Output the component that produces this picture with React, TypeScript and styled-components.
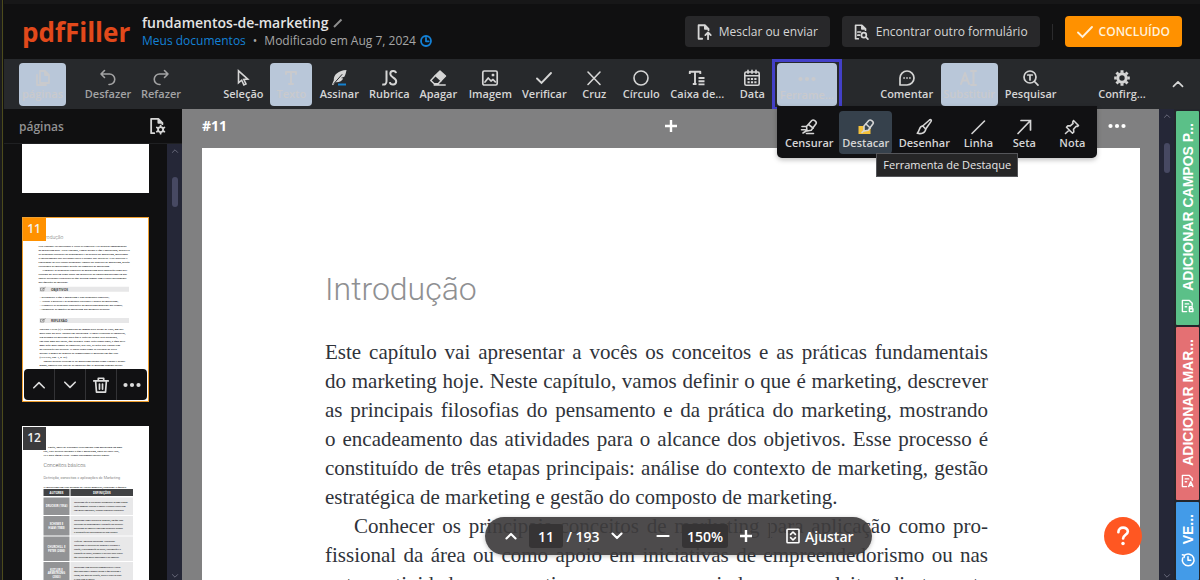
import React from "react";
import styled, { createGlobalStyle, css } from "styled-components";

const ui = `"Open Sans", "Noto Sans", sans-serif`;

const GlobalStyle = createGlobalStyle`
  *, *::before, *::after { box-sizing: border-box; }
  html, body { margin: 0; padding: 0; background: #111112; }
  body { font-family: ${ui}; font-size: 12px; color: #d6d6d6; overflow: hidden; }
  button, input { font: inherit; color: inherit; margin: 0; padding: 0; border: 0; background: none; }
  button { cursor: pointer; }
  a { text-decoration: none; }
  svg { display: block; flex: none; }
`;

/* ---------- icons ---------- */

type IconProps = { size?: number; width?: number; children: React.ReactNode };

const Icon = ({ size = 20, width = 2, children }: IconProps) => (
  <svg
    width={size}
    height={size}
    viewBox="0 0 20 20"
    fill="none"
    stroke="currentColor"
    strokeWidth={width}
    strokeLinecap="round"
    strokeLinejoin="round"
    aria-hidden="true"
  >
    {children}
  </svg>
);

const PagesIcon = () => (
  <Icon width={1.8}>
    <path d="M7 3h5l4 4v8H7zM4 7v10h9M12 3v4h4" />
  </Icon>
);
const UndoIcon = () => (
  <Icon width={1.6}>
    <path d="M6.500 2.500 3 6l3.500 3.500M3 6h8.500a5.200 5.200 0 0 1 0 10.500H11" />
  </Icon>
);
const RedoIcon = () => (
  <Icon width={1.6}>
    <path d="M13.500 2.500 17 6l-3.500 3.500M17 6H8.500a5.200 5.200 0 0 0 0 10.500H9" />
  </Icon>
);
const CursorIcon = () => (
  <Icon width={1.6}>
    <path d="M5.500 2.800v12l3.200-2.600 2.200 4.800 2.100-1-2.200-4.500 4-.4z" strokeLinejoin="miter" />
  </Icon>
);
const TextIcon = () => (
  <Icon width={2}>
    <path d="M5 6V4h10v2M10 4v12M8 16h4" />
  </Icon>
);
const FeatherIcon = () => (
  <Icon width={1.4}>
    <path
      d="M17.500 2C9.500 2.500 4.500 6.500 4.800 12.300L3 16.500l1 .7 2.400-3c4 .3 6.600-1.200 7.800-3.700l-2.300-.4 3.400-1.300C16.600 6.800 17 4.500 17.500 2z"
      fill="currentColor"
      stroke="none"
    />
    <path d="M5 15.500 13 6.500" stroke="#27292c" strokeWidth="1" />
    <path d="M9 16.500h8" stroke="#1481cf" strokeWidth="2" strokeLinecap="butt" />
  </Icon>
);
const InitialsIcon = () => (
  <Icon width={2}>
    <path
      d="M7.500 2.500v10.800c0 2.700-1.600 3.600-4.300 3.200M17 5.200c-.5-3-5.700-3-5.700.8 0 3.900 5.900 3.300 5.900 7.300 0 4.300-5.700 4.100-6.400.8"
      strokeLinecap="butt"
    />
  </Icon>
);
const EraserIcon = () => (
  <Icon width={1.5}>
    <path d="m12 3 5.500 5-4.300 4.600-5.800-5.100z" fill="currentColor" />
    <path d="m7.400 7.500-4.600 5 3.400 3.300h4l3-3.200M6.200 17h11" />
  </Icon>
);
const ImageIcon = () => (
  <Icon width={1.7}>
    <rect x="2.800" y="3" width="14.400" height="14" rx="1.500" />
    <path d="m5 14 3.200-4 2.800 3 2-1.500 2.300 2.300M12.500 6.500h1v1h-1z" />
  </Icon>
);
const CheckIcon = () => (
  <Icon width={1.9}>
    <path d="m3 10.500 4.500 4.500L17 5" strokeLinejoin="miter" />
  </Icon>
);
const CrossIcon = () => (
  <Icon width={1.6}>
    <path d="m4 4 12 12.500M16 4 4 16.500" />
  </Icon>
);
const CircleIcon = () => (
  <Icon width={1.6}>
    <circle cx="10" cy="10" r="7" />
  </Icon>
);
const TextBoxIcon = () => (
  <Icon width={1.9}>
    <path
      d="M2.800 6V3.800h10.500V6M8 3.800V16M5.800 16h3.700M11.500 10h6M11.500 13.200h6M11.500 16.400h6"
      strokeLinecap="butt"
    />
  </Icon>
);
const DateIcon = () => (
  <Icon width={1.6}>
    <rect x="2.800" y="4" width="14.400" height="13.200" rx="1.500" />
    <path d="M2.800 7.800h14.400M6 2.300v3M14 2.300v3M10 2.300v3" />
    <path d="M5.500 11h9M5.500 14.200h9" strokeDasharray="2.200 1.200" strokeLinecap="butt" strokeWidth="2" />
  </Icon>
);
const DotsIcon = () => (
  <Icon>
    <g fill="currentColor" stroke="none">
      <circle cx="3.500" cy="10" r="2.100" />
      <circle cx="10" cy="10" r="2.100" />
      <circle cx="16.500" cy="10" r="2.100" />
    </g>
  </Icon>
);
const CommentIcon = () => (
  <Icon width={1.7}>
    <path d="M3 17V10a7 7 0 1 1 7 7z" />
    <path d="M6.300 10h1.600M9.200 10h1.600M12.100 10h1.600" strokeLinecap="butt" />
  </Icon>
);
const ReplaceIcon = () => (
  <Icon width={2}>
    <path d="m2 16 4-11 4 11M3.500 12.500h5M12 3h5M14.500 3v14M12 17h5" />
  </Icon>
);
const SearchTextIcon = () => (
  <Icon width={1.7}>
    <circle cx="9" cy="9" r="6" />
    <path d="m13.500 13.500 3.500 3.700M6.700 7h4.600M9 7v5" />
  </Icon>
);
const GearIcon = () => (
  <Icon width={2}>
    <circle cx="10" cy="10" r="4.200" strokeWidth="3" />
    <path
      d="M10 2.200v2.500M10 15.300v2.500M2.200 10h2.500M15.300 10h2.500M4.500 4.500l1.700 1.700M13.800 13.800l1.700 1.700M4.500 15.500l1.700-1.700M13.800 6.200l1.700-1.700"
      strokeLinecap="butt"
      strokeWidth="3"
    />
  </Icon>
);
const RedactIcon = () => (
  <Icon width={1.6}>
    <path d="m7.500 9.500 5.300-6c1.800-1.500 5.500 1.300 4.200 3.300l-4.800 6.500-4.200.7zM9.500 7.500l4.700 3.700M8 13.500 4 16M3 9.500h4M2.500 12.700h4M7.500 16.500h7" />
  </Icon>
);
const HighlightIcon = () => (
  <Icon width={1.6}>
    <path d="M2.500 9h12v8h-12z" fill="#f3c13a" stroke="none" />
    <path d="m8 9 4.800-5.500c1.800-1.500 5.500 1.300 4.200 3.300l-4.800 6.500-4.200.7z" fill="#38444f" />
    <path d="m10 7 4.200 4M8 13.500l-2 2" />
  </Icon>
);
const BrushIcon = () => (
  <Icon width={1.6}>
    <path d="M8.700 9 15.500 3c1.200-.9 2.300.1 1.600 1.400L11.700 12" />
    <path d="M8.700 9c-3.800.2-2.700 4.500-5.400 7.300 4 1 8.200-.3 8.400-4.300z" />
  </Icon>
);
const LineIcon = () => (
  <Icon width={1.6}>
    <path d="M4 16.500 16.500 4" />
  </Icon>
);
const ArrowIcon = () => (
  <Icon width={1.7}>
    <path d="M4 16.500 16 4M7 3.500h9.500V13" strokeLinejoin="miter" />
  </Icon>
);
const PinIcon = () => (
  <Icon width={1.6}>
    <path d="m11.500 3.500 5 5-1.300 1-1-.3-2.700 3 .3 2.800-1.300 1.200-6-6L5.800 8.800l2.500.1 2.800-2.500-.4-1.200zM7.300 13 3.500 16.500" />
  </Icon>
);
const PencilIcon = () => (
  <Icon size={10}>
    <path d="M2 18 17 3" stroke="#8e8e8e" strokeWidth="4" strokeLinecap="butt" />
  </Icon>
);
const ClockIcon = () => (
  <Icon size={12} width={3}>
    <circle cx="10" cy="10" r="8.300" />
    <path d="M10 5v5.500h4.500" />
  </Icon>
);
const HistoryIcon = () => (
  <Icon size={16} width={1.9}>
    <path d="M5.500 4.300A7.300 7.300 0 1 1 3.300 7.500M3 3.500l2.700.6-.6 2.700M10 6v4.300h3.500" />
  </Icon>
);
const FileUpIcon = () => (
  <Icon size={18} width={2}>
    <path d="M8 17.500H4v-15h7l4 4V8M11 2.500v4h4M14.500 18v-7M11.500 13.500l3-3 3 3" />
  </Icon>
);
const FileSearchIcon = () => (
  <Icon size={18} width={1.9}>
    <path d="M7 17.500H4v-15h7l4 4V8M11 2.500v4h4M6.500 10h3M6.500 13.500h2" />
    <circle cx="13.200" cy="13.500" r="2.700" />
    <path d="m15.500 15.800 2.200 2.200" />
  </Icon>
);
const FileGearIcon = () => (
  <Icon size={18} width={2}>
    <path d="M7 18H3.500V2h8l4.500 4.500V8M11.500 2v4.500H16" />
    <circle cx="14" cy="14" r="2.800" />
    <path d="M14 9.500v1M14 17.500v1M9.800 11.700l1 .6M17.200 15.700l1 .6M9.800 16.300l1-.6M17.200 12.300l1-.6" />
  </Icon>
);
const ChevronUp = ({ size = 16, width = 2 }: { size?: number; width?: number }) => (
  <Icon size={size} width={width}>
    <path d="m3.500 13.500 6.500-6.500 6.500 6.500" />
  </Icon>
);
const ChevronDown = ({ size = 16, width = 2 }: { size?: number; width?: number }) => (
  <Icon size={size} width={width}>
    <path d="m3.500 6.500 6.500 6.500 6.500-6.500" />
  </Icon>
);
const TrashIcon = () => (
  <Icon size={18} width={1.9}>
    <path d="M2 5.500h16M7 5V2.500h6V5M4 5.500l1 12.500h10l1-12.500M8.300 9v5.500M11.700 9v5.500" />
  </Icon>
);
const PlusIcon = () => (
  <Icon size={16} width={3}>
    <path d="M10 2.500v15M2.500 10h15" strokeLinecap="butt" />
  </Icon>
);
const MinusIcon = () => (
  <Icon size={16} width={2.6}>
    <path d="M3 10h14" />
  </Icon>
);
const FitIcon = () => (
  <Icon size={16} width={2}>
    <rect x="2.500" y="1.500" width="15" height="17" rx="1" />
    <path d="m7 8 3-3 3 3M7 12l3 3 3-3" />
  </Icon>
);
const FieldIcon = ({ mark }: { mark: string }) => (
  <Icon size={14} width={2}>
    <path d="M8 18H2V2h10l4 4v3M6 7h5M6 11h2" />
    <path d={mark} />
  </Icon>
);

/* ---------- shell ---------- */

const Shell = styled.div`
  height: 100vh;
  display: flex;
  flex-direction: column;
  padding-left: 2px;
  border-left: 2px solid #1b1b1c;
  box-shadow: inset 1px 0 #4c4b1c;
  background: #111112;
  overflow: hidden;
`;

const Header = styled.header`
  flex: none;
  height: 59px;
  display: flex;
  align-items: center;
  padding: 0 18px;
  background: #101011;
  border-top: 4px solid #171718;
`;

const Logo = styled.a`
  width: 120px;
  font-size: 26px;
  line-height: 32px;
  font-weight: 700;
  color: #e2491b;
`;

const DocInfo = styled.div`
  flex: 1;
  display: flex;
  flex-direction: column;
`;

const DocTitle = styled.h1`
  display: flex;
  align-items: center;
  gap: 5px;
  margin: 0;
  font-size: 14px;
  line-height: 18px;
  font-weight: 600;
  color: #e4e4e4;
`;

const DocMeta = styled.div`
  display: flex;
  align-items: center;
  gap: 7px;
  font-size: 12px;
  line-height: 18px;
  font-weight: 500;
  color: #a6a6a6;
  a { color: #1481d6; }
  svg { color: #1481d6; margin-left: -3px; }
`;

const HeaderActions = styled.div`
  display: flex;
  align-items: center;
  gap: 12px;
`;

const HeaderButton = styled.button<{ $primary?: boolean }>`
  display: flex;
  align-items: center;
  gap: ${(p) => (p.$primary ? 4 : 6)}px;
  height: 31px;
  padding: 0 12px 0 10px;
  border-radius: 4px;
  font-weight: ${(p) => (p.$primary ? 600 : 500)};
  background: ${(p) => (p.$primary ? "#ff9100" : "#28282a")};
  color: ${(p) => (p.$primary ? "#fff1dc" : "#d6d6d6")};
  white-space: nowrap;
`;

const Divider = styled.span`
  width: 1px;
  height: 16px;
  background: #2b2b2d;
`;

/* ---------- toolbar ---------- */

const Toolbar = styled.nav`
  flex: none;
  height: 50px;
  display: flex;
  align-items: center;
  padding: 0 8px 0 15px;
  background: #27292c;
`;

const Group = styled.div<{ $gap?: number }>`
  position: relative;
  display: flex;
  align-items: center;
  margin-left: ${(p) => p.$gap ?? 0}px;
`;

const Spring = styled.span`
  flex: 1;
`;

const ToolButton = styled.button<{ $w: number; $lit?: boolean; $muted?: boolean; $hover?: boolean }>`
  width: ${(p) => p.$w}px;
  height: 43px;
  display: flex;
  flex-direction: column;
  align-items: center;
  justify-content: center;
  border-radius: 4px;
  font-size: 11px;
  line-height: 12px;
  font-weight: 600;
  white-space: nowrap;
  color: ${(p) => (p.$muted ? "#a3a3a4" : "#d5d5d5")};
  ${(p) => p.$lit && css`
    background: #b9c7d9;
    color: #c9cacd;
    overflow: hidden;
  `}
  ${(p) => p.$hover && css`
    background: #36414c;
  `}
`;

const FocusFrame = styled.div`
  display: flex;
  align-items: center;
  justify-content: center;
  width: 70px;
  height: 51px;
  margin: 0 0 -1px -4px;
  padding-right: 1px;
  border: 3px solid #4340c8;
`;

const ToolMenu = styled.div`
  position: absolute;
  z-index: 3;
  top: 47px;
  right: -255px;
  display: flex;
  align-items: center;
  padding: 5px 1px 4px 2px;
  background: #111113;
  border-radius: 0 0 5px 5px;
  box-shadow: 0 2px 5px rgba(0, 0, 0, 0.25);
`;

const Tooltip = styled.div`
  position: absolute;
  top: 47px;
  left: 99px;
  height: 24px;
  padding: 0 6px;
  border: 1px solid #55565a;
  background: #262627;
  color: #e8e8e8;
  font-size: 11px;
  line-height: 22px;
  white-space: nowrap;
`;

const IconButton = styled.button<{ $w: number; $h: number }>`
  width: ${(p) => p.$w}px;
  height: ${(p) => p.$h}px;
  flex: none;
  display: flex;
  align-items: center;
  justify-content: center;
`;

/* ---------- work area ---------- */

const Work = styled.div`
  flex: 1;
  min-height: 0;
  display: flex;
`;

const Sidebar = styled.aside`
  flex: none;
  width: 178px;
  display: flex;
  flex-direction: column;
  background: #101011;
`;

const SidebarHead = styled.div`
  flex: none;
  height: 35px;
  display: flex;
  align-items: center;
  justify-content: space-between;
  padding: 0 16px 0 15px;
  border-bottom: 1px solid #1f2022;
  h2 { margin: 0; font-size: 12px; font-weight: 600; color: #929293; }
`;

const SidebarBody = styled.div`
  flex: 1;
  min-height: 0;
  display: flex;
`;

const ThumbList = styled.div`
  flex: 1;
  display: flex;
  flex-direction: column;
  gap: 24px;
  padding: 0 18px;
  overflow: hidden;
`;

const Thumb = styled.div<{ $h: number; $active?: boolean }>`
  flex: none;
  position: relative;
  height: ${(p) => p.$h}px;
  background: #fff;
  border: 1px solid ${(p) => (p.$active ? "#f0a030" : "#fff")};
  overflow: hidden;
`;

const Badge = styled.span<{ $active?: boolean }>`
  position: absolute;
  top: -1px;
  left: -1px;
  width: 24px;
  height: 24px;
  line-height: 24px;
  text-align: center;
  font-weight: 600;
  color: #f1f1f1;
  background: ${(p) => (p.$active ? "#ff9100" : "#3b3b3d")};
`;

const ThumbActions = styled.div`
  position: absolute;
  left: 1px;
  right: 1px;
  bottom: 1px;
  height: 31px;
  display: flex;
  border-radius: 4px;
  background: #111113;
  color: #dcdcdc;
  button { flex: 1; display: flex; align-items: center; justify-content: center; }
  button + button { border-left: 1px solid #333336; }
`;

const ScrollTrack = styled.div<{ $pad: number }>`
  flex: none;
  width: 15px;
  display: flex;
  flex-direction: column;
  align-items: center;
  justify-content: space-between;
  padding-top: 3px;
  background: #252737;
  color: #77798a;
  i { flex: none; width: 6px; height: 30px; border-radius: 3px; background: #474962; margin-top: ${(p) => p.$pad}px; }
  div { display: flex; flex-direction: column; align-items: center; }
`;

const Viewer = styled.main`
  flex: 1;
  min-width: 0;
  display: flex;
  flex-direction: column;
  position: relative;
  padding: 0 19px 0 20px;
  background: #808081;
  overflow: hidden;
`;

const PageBar = styled.div`
  flex: none;
  height: 39px;
  display: grid;
  grid-template-columns: 1fr auto 1fr;
  align-items: center;
  padding-bottom: 6px;
  color: #fff;
  strong { font-size: 14px; font-weight: 700; }
  > :last-child { justify-self: end; margin-right: 13px; }
`;

const Paper = styled.article`
  flex: 1 0 auto;
  padding: 121px 152px 0 123px;
  background: #fff;
  h2 {
    margin: 0;
    font-family: Roboto, sans-serif;
    font-weight: 300;
    font-size: 32px;
    line-height: 40px;
    color: #8f9092;
  }
  p {
    margin: 0;
    font-family: "Liberation Serif", serif;
    font-size: 21px;
    line-height: 29px;
    color: #2f333a;
  }
  h2 + p { margin-top: 29px; }
`;

const TextLine = styled.span<{ $last?: boolean; $indent?: boolean }>`
  display: block;
  white-space: nowrap;
  text-align-last: ${(p) => (p.$last ? "left" : "justify")};
  padding-left: ${(p) => (p.$indent ? 29 : 0)}px;
`;

const Pager = styled.div`
  position: absolute;
  bottom: 25px;
  left: 303px;
  height: 38px;
  display: flex;
  align-items: center;
  border-radius: 19px;
  background: rgba(62, 60, 61, 0.92);
  color: #fff;
  font-size: 14px;
  font-weight: 600;
  box-shadow: 0 1px 4px rgba(0, 0, 0, 0.25);
`;

const PagerPart = styled.div<{ $line?: boolean; $start?: number; $end?: number }>`
  height: 38px;
  display: flex;
  align-items: center;
  padding: 0 ${(p) => p.$end ?? 0}px 0 ${(p) => p.$start ?? 0}px;
  border-left: ${(p) => (p.$line ? "1px solid #4d4b4c" : "0")};
`;

const PagerField = styled.input<{ $w: number }>`
  width: ${(p) => p.$w}px;
  height: 24px;
  border-radius: 3px;
  background: #363435;
  text-align: center;
`;

const FitButton = styled.button`
  display: flex;
  align-items: center;
  gap: 4px;
  height: 38px;
  padding: 0 18px 0 14px;
`;

const HelpButton = styled.button`
  position: absolute;
  right: 17px;
  bottom: 25px;
  width: 38px;
  height: 38px;
  border-radius: 50%;
  background: #ff5722;
  color: #fff;
  display: flex;
  align-items: center;
  justify-content: center;
`;

const SideTabs = styled.div`
  flex: none;
  width: 26px;
  display: flex;
  flex-direction: column;
  gap: 2px;
  padding: 2px 1px 0 2px;
  background: #24262b;
`;

const SideTab = styled.button<{ $c: string; $h?: number }>`
  flex: ${(p) => (p.$h ? `0 0 ${p.$h}px` : "1 0 auto")};
  display: flex;
  flex-direction: column-reverse;
  align-items: center;
  gap: 8px;
  padding: 12px 0;
  background: ${(p) => p.$c};
  color: #fff;
  border-radius: 1px;
`;

const SideLabel = styled.span`
  writing-mode: vertical-rl;
  transform: rotate(180deg);
  font-family: "Liberation Sans", Arial, sans-serif;
  font-weight: 700;
  font-size: 14px;
  line-height: 16px;
  white-space: nowrap;
`;

/* ---------- thumbnails ---------- */

const introLines = [
  "Este capítulo vai apresentar a vocês os conceitos e as práticas fundamentais",
  "do marketing hoje. Neste capítulo, vamos definir o que é marketing, descrever",
  "as principais filosofias do pensamento e da prática do marketing, mostrando",
  "o encadeamento das atividades para o alcance dos objetivos. Esse processo é",
  "constituído de três etapas principais: análise do contexto de marketing, gestão",
  "estratégica de marketing e gestão do composto de marketing.",
];
const secondLines = [
  "Conhecer os principais conceitos de marketing para aplicação como pro-",
  "fissional da área ou como apoio em iniciativas de empreendedorismo ou nas",
  "outras atividades corporativas que possam ajudar com o leitor diretamente",
];

const thumbText = {
  fontFamily: "Liberation Serif",
  fontSize: 11,
  fontWeight: 700,
  fill: "#242426",
};

const Thumb11Art = () => (
  <svg width="100%" viewBox="0 0 500 728" aria-hidden="true">
    <text x="66" y="82" fontFamily="Roboto" fontWeight="300" fontSize="20" fill="#777">Introdução</text>
    <g {...thumbText}>
      {introLines.map((t, i) => <text key={t} x="62" y={115 + i * 16}>{t}</text>)}
      {secondLines.map((t, i) => <text key={t} x={i ? 62 : 78} y={211 + i * 16}>{t}</text>)}
      <text x="62" y="259">das questões de mercado.</text>
      {[
        "– Reconhecer o que é marketing e seus principais conceitos;",
        "– Avaliar a história e as principais correntes e papéis do marketing;",
        "– Conhecer as principais aplicações do marketing moderno nas firmas;",
        "– Identificar as funções do marketing nas melhores práticas.",
      ].map((t, i) => <text key={t} x="66" y={321 + i * 16}>{t}</text>)}
      {[
        "Theodor Levitt (1) é reconhecido no mundo pelo artigo de 1960, um dos",
        "mais lidos na área: Miopia em Marketing. O autor relaciona as empresas,",
        "seu produto ao mercado para que a visão do cliente seja orientada,",
        "em cada uma das ideias, que procura. Uma visão ainda atual, a qual deve",
        "uma ação mais ampla de empresas; por isso, as ações das vendas têm",
        "na satisfação das pessoas. O autor conta como as estradas de ferro",
        "decidir o futuro do negócio ao compreender o mercado em que está.",
        "(LEVITT, cap. 1, p. 21).",
      ].map((t, i) => <text key={t} x="66" y={446 + i * 16}>{t}</text>)}
      {[
        "Muitas pessoas referem-se ao marketing apenas como vendas e propa-",
        "ganda, embora esse fato de as empresas que se utilizam somente destas",
        "ferramentas sejam destaque a marca na mídia, entretanto, todas as",
      ].map((t, i) => <text key={t} x={i ? 66 : 82} y={574 + i * 16}>{t}</text>)}
    </g>
    <g fontFamily="Open Sans" fontWeight="700" fontSize="13" fill="#444">
      <path d="M66 275h358v20H66zM66 400h358v20H66z" fill="#e7e7e8" />
      <path d="M70 280h14v11H70zm5 7 15-10M70 405h14v11H70zm5 7 15-10" fill="none" stroke="#555" strokeWidth="2" />
      <text x="112" y="290">OBJETIVOS</text>
      <text x="112" y="415">REFLEXÃO</text>
    </g>
  </svg>
);

const definitions = [
  { y: 282, h: 70, who: ["DRUCKER (1954)"], text: ["Marketing são as atividades sistemáticas de uma organi-", "zação humana voltadas a buscar e realizar trocas com", "seus meios ambientes, visando benefícios específicos."] },
  { y: 356, h: 78, who: ["SCHEWE E", "HIAM (1988)"], text: ["Marketing é uma filosofia de negócios, em que toda", "estratégia de planejamento e execução dos projetos", "marketing da empresa tem como propósito atender", "a orientação das necessidades de seus clientes."] },
  { y: 438, h: 98, who: ["CHURCHILL E", "PETER (2000)"], text: ["Visão da American Marketing Association:", "Marketing é o processo de planejar e executar a", "cepção, a determinação do preço, a promoção e a", "tribuição de ideias, produtos e serviços para trocas", "que satisfaçam metas individuais e da empresa."] },
  { y: 540, h: 90, who: ["KOTLER E", "ARMSTRONG", "(2003)"], text: ["Marketing é um processo administrativo e social", "qual indivíduos e grupos obtêm o que precisam e", "sejam, por meio da criação, oferta e troca de bens", "e valor com os outros."] },
];

const Thumb12Art = () => (
  <svg width="100%" viewBox="0 0 500 728" aria-hidden="true">
    <g {...thumbText}>
      <text x="100" y="82">Então, antes de trabalhar efetivamente com marketing em uma</text>
      <text x="82" y="98">ção, você precisa entender o que é marketing, antes de fazer isso,</text>
      <text x="82" y="114">vê e para quem é feito. Vamos aprofundar nossos temas!</text>
      <text x="82" y="242">O marketing tem sido definido de várias maneiras, conforme o quadro.</text>
    </g>
    <text x="82" y="160" fontFamily="Roboto" fontWeight="300" fontSize="21" fill="#555">Conceitos básicos</text>
    <text x="82" y="206" fontFamily="Roboto" fontWeight="300" fontSize="15" fill="#555">Definição, conceitos e aplicações de Marketing</text>
    <path d="M82 248h104v28H82zM190 248h250v28H190z" fill="#414244" />
    <g fontFamily="Open Sans" fontWeight="700" fontSize="12" fill="#fff" textAnchor="middle">
      <text x="134" y="266">AUTORES</text>
      <text x="315" y="266">DEFINIÇÕES</text>
    </g>
    {definitions.map((d) => (
      <g key={d.y}>
        <rect x="82" y={d.y} width="104" height={d.h} fill="#929395" />
        <rect x="190" y={d.y} width="250" height={d.h} fill="#e8e8e9" />
        {d.who.map((t, i) => (
          <text key={t} x="134" y={d.y + d.h / 2 + 4 + (i - (d.who.length - 1) / 2) * 15} textAnchor="middle" fontFamily="Open Sans" fontWeight="700" fontSize="11" fill="#fff">{t}</text>
        ))}
        {d.text.map((t, i) => (
          <text key={t} {...thumbText} fontSize={9} x="204" y={d.y + d.h / 2 + 4 + (i - (d.text.length - 1) / 2) * 16}>{t}</text>
        ))}
      </g>
    ))}
  </svg>
);

/* ---------- page ---------- */

type Tool = { label: string; w: number; icon: React.ReactNode; lit?: boolean; muted?: boolean; hover?: boolean };

const undoTools: Tool[] = [
  { label: "Desfazer", w: 56, icon: <UndoIcon />, muted: true },
  { label: "Refazer", w: 50, icon: <RedoIcon />, muted: true },
];
const mainTools: Tool[] = [
  { label: "Seleção", w: 54, icon: <CursorIcon /> },
  { label: "Texto", w: 42, icon: <TextIcon />, lit: true },
  { label: "Assinar", w: 54, icon: <FeatherIcon /> },
  { label: "Rubrica", w: 46, icon: <InitialsIcon /> },
  { label: "Apagar", w: 52, icon: <EraserIcon /> },
  { label: "Imagem", w: 52, icon: <ImageIcon /> },
  { label: "Verificar", w: 56, icon: <CheckIcon /> },
  { label: "Cruz", w: 44, icon: <CrossIcon /> },
  { label: "Círculo", w: 50, icon: <CircleIcon /> },
  { label: "Caixa de...", w: 62, icon: <TextBoxIcon /> },
  { label: "Data", w: 48, icon: <DateIcon /> },
];
const reviewTools: Tool[] = [
  { label: "Comentar", w: 68, icon: <CommentIcon /> },
  { label: "Substituir", w: 57, icon: <ReplaceIcon />, lit: true },
  { label: "Pesquisar", w: 66, icon: <SearchTextIcon /> },
];
const moreTools: Tool[] = [
  { label: "Censurar", w: 60, icon: <RedactIcon /> },
  { label: "Destacar", w: 53, icon: <HighlightIcon />, hover: true },
  { label: "Desenhar", w: 64, icon: <BrushIcon /> },
  { label: "Linha", w: 44, icon: <LineIcon /> },
  { label: "Seta", w: 48, icon: <ArrowIcon /> },
  { label: "Nota", w: 48, icon: <PinIcon /> },
];

const Tools = ({ items }: { items: Tool[] }) => (
  <>
    {items.map((t) => (
      <ToolButton key={t.label} $w={t.w} $lit={t.lit} $muted={t.muted} $hover={t.hover}>
        {t.icon}
        {t.label}
      </ToolButton>
    ))}
  </>
);

const Scroll = ({ pad }: { pad: number }) => (
  <ScrollTrack $pad={pad} aria-hidden="true">
    <div>
      <ChevronUp size={8} />
      <i />
    </div>
    <ChevronDown size={8} />
  </ScrollTrack>
);

export default function App() {
  return (
    <Shell>
      <GlobalStyle />
      <Header>
        <Logo href="#">pdfFiller</Logo>
        <DocInfo>
          <DocTitle>
            fundamentos-de-marketing <PencilIcon />
          </DocTitle>
          <DocMeta>
            <a href="#">Meus documentos</a>
            <span>•</span>
            <span>Modificado em Aug 7, 2024</span>
            <ClockIcon />
          </DocMeta>
        </DocInfo>
        <HeaderActions>
          <HeaderButton><FileUpIcon />Mesclar ou enviar</HeaderButton>
          <HeaderButton><FileSearchIcon />Encontrar outro formulário</HeaderButton>
          <Divider />
          <HeaderButton $primary><CheckIcon />CONCLUÍDO</HeaderButton>
        </HeaderActions>
      </Header>

      <Toolbar>
        <Group>
          <ToolButton $w={47} $lit><PagesIcon />páginas</ToolButton>
        </Group>
        <Group $gap={14}><Tools items={undoTools} /></Group>
        <Spring />
        <Group>
          <Tools items={mainTools} />
          <FocusFrame>
            <ToolButton $w={60} $lit><DotsIcon />Ferrame...</ToolButton>
          </FocusFrame>
          <ToolMenu>
            <Tools items={moreTools} />
            <Tooltip role="tooltip">Ferramenta de Destaque</Tooltip>
          </ToolMenu>
        </Group>
        <Spring />
        <Group><Tools items={reviewTools} /></Group>
        <Spring />
        <Group>
          <ToolButton $w={56}><GearIcon />Confirg...</ToolButton>
        </Group>
        <Group $gap={14}>
          <IconButton $w={28} $h={43} aria-label="Recolher"><ChevronUp size={14} width={2.4} /></IconButton>
        </Group>
      </Toolbar>

      <Work>
        <Sidebar>
          <SidebarHead>
            <h2>páginas</h2>
            <IconButton $w={18} $h={24} aria-label="Configurar páginas"><FileGearIcon /></IconButton>
          </SidebarHead>
          <SidebarBody>
            <ThumbList>
              <Thumb $h={49} />
              <Thumb $h={185} $active>
                <Thumb11Art />
                <Badge $active>11</Badge>
                <ThumbActions>
                  <button aria-label="Mover para cima"><ChevronUp /></button>
                  <button aria-label="Mover para baixo"><ChevronDown /></button>
                  <button aria-label="Excluir"><TrashIcon /></button>
                  <button aria-label="Mais"><DotsIcon /></button>
                </ThumbActions>
              </Thumb>
              <Thumb $h={185}>
                <Thumb12Art />
                <Badge>12</Badge>
              </Thumb>
            </ThumbList>
            <Scroll pad={22} />
          </SidebarBody>
        </Sidebar>

        <Viewer>
          <PageBar>
            <strong>#11</strong>
            <IconButton $w={24} $h={24} aria-label="Adicionar página"><PlusIcon /></IconButton>
            <IconButton $w={20} $h={24} aria-label="Opções da página"><DotsIcon /></IconButton>
          </PageBar>
          <Paper>
            <h2>Introdução</h2>
            <p>
              {introLines.map((t, i) => <TextLine key={t} $last={i === introLines.length - 1}>{t}</TextLine>)}
            </p>
            <p>
              {secondLines.map((t, i) => <TextLine key={t} $indent={i === 0}>{t}</TextLine>)}
            </p>
          </Paper>
          <Pager>
            <PagerPart $start={8} $end={10}>
              <IconButton $w={36} $h={38} aria-label="Página anterior"><ChevronUp size={14} width={3} /></IconButton>
              <PagerField $w={34} defaultValue="11" aria-label="Página" />
              <IconButton as="span" $w={40} $h={38}>/ 193</IconButton>
              <IconButton $w={28} $h={38} aria-label="Próxima página"><ChevronDown size={14} width={3} /></IconButton>
            </PagerPart>
            <PagerPart $line $start={2} $end={6}>
              <IconButton $w={38} $h={38} aria-label="Diminuir"><MinusIcon /></IconButton>
              <PagerField $w={46} defaultValue="150%" aria-label="Zoom" />
              <IconButton $w={36} $h={38} aria-label="Aumentar"><PlusIcon /></IconButton>
            </PagerPart>
            <PagerPart $line>
              <FitButton><FitIcon />Ajustar</FitButton>
            </PagerPart>
          </Pager>
          <HelpButton aria-label="Ajuda">
            <Icon size={22} width={2.4}>
              <path d="M5.800 6.500c0-5.700 8.600-5.200 8.600-.6 0 3-4.300 3-4.300 6.400" />
              <circle cx="10" cy="16.800" r="1.600" fill="currentColor" stroke="none" />
            </Icon>
          </HelpButton>
        </Viewer>
        <Scroll pad={23} />
        <SideTabs>
          <SideTab $c="#5bc088" $h={214}>
            <FieldIcon mark="M12 11h4v3h-4zM12 14h5v4h-5z" />
            <SideLabel>ADICIONAR CAMPOS P...</SideLabel>
          </SideTab>
          <SideTab $c="#e47073" $h={171}>
            <FieldIcon mark="m11 18 3-7 3 7M12 16h4" />
            <SideLabel>ADICIONAR MAR...</SideLabel>
          </SideTab>
          <SideTab $c="#439be8">
            <HistoryIcon />
            <SideLabel>VE...</SideLabel>
          </SideTab>
        </SideTabs>
      </Work>
    </Shell>
  );
}
